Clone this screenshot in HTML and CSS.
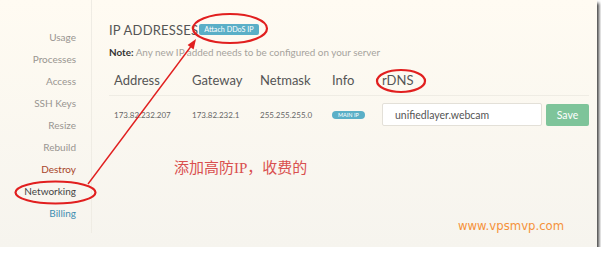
FILE: index.html
```html
<!DOCTYPE html>
<html lang="en">
<head>
  <meta charset="UTF-8">
  <title>Networking</title>
  <link rel="stylesheet" href="styles.css">
</head>
<body>
  <div class="shot">
    <aside class="side">
      <a class="nav">Usage</a>
      <a class="nav">Processes</a>
      <a class="nav">Access</a>
      <a class="nav">SSH Keys</a>
      <a class="nav">Resize</a>
      <a class="nav">Rebuild</a>
      <a class="nav destroy">Destroy</a>
      <a class="nav active">Networking</a>
      <a class="nav billing">Billing</a>
    </aside>
    <main class="main">
      <div class="title-row">
        <h2>IP ADDRESSES</h2>
        <button class="btn-ddos">Attach DDoS IP</button>
      </div>
      <p class="note"><b>Note:</b> Any new IP added needs to be configured on your server</p>
      <div class="ip-table">
        <div class="th">Address</div>
        <div class="th">Gateway</div>
        <div class="th">Netmask</div>
        <div class="th">Info</div>
        <div class="th">rDNS</div>
        <div class="td">173.82.232.207</div>
        <div class="td">173.82.232.1</div>
        <div class="td">255.255.255.0</div>
        <div class="td"><span class="badge">MAIN IP</span></div>
        <div class="td rdns">
          <input class="rdns-input" type="text" value="unifiedlayer.webcam">
          <button class="btn-save">Save</button>
        </div>
      </div>
    </main>

    <!-- annotations drawn over the screenshot -->
    <svg class="marks" width="597" height="247" viewBox="0 0 597 247">
      <ellipse cx="55.5" cy="192.5" rx="40" ry="11" />
      <ellipse cx="230" cy="28.5" rx="37" ry="14.5" />
      <ellipse cx="401" cy="81" rx="24" ry="11" />
      <line x1="88" y1="184" x2="192" y2="45" />
      <polygon class="head" points="196,39 193.6,49.5 187.6,45" />
    </svg>
    <p class="cn">添加高防IP，收费的</p>
    <p class="site">www.vpsmvp.com</p>
  </div>
</body>
</html>
```

FILE: styles.css
```css
body {
  margin: 0;
  background: #ffffff;
  font-family: "Lato", "Open Sans", sans-serif;
}
.shot {
  position: relative;
  width: 597px;
  height: 247px;
  display: flex;
  background: linear-gradient(180deg, #fffbf2, #f6f4ee);
  box-shadow: 2px 3px 3px rgba(0, 0, 0, 0.75);
  overflow: hidden;
}
.side {
  width: 77px;
  padding: 26px 15px 0 0;
  margin-bottom: 14px;
  border-right: 1px solid #efece4;
  display: flex;
  flex-direction: column;
  align-items: flex-end;
}
.nav {
  font-size: 10px;
  line-height: 22px;
  color: #999590;
}
.nav.destroy {
  color: #a8452a;
}
.nav.active {
  color: #444;
}
.nav.billing {
  color: #3d8db0;
}
.main {
  flex: 1;
  padding: 22px 8px 0 17px;
}
.title-row {
  display: flex;
  align-items: center;
  height: 15px;
}
.title-row h2 {
  margin: 0;
  font-size: 13px;
  font-weight: 400;
  color: #555;
  letter-spacing: 0.2px;
}
.btn-ddos {
  margin-left: 1px;
  height: 11px;
  padding: 0 5px;
  border: none;
  border-radius: 2px;
  background: #5aafc7;
  color: #fff;
  font-family: inherit;
  font-size: 7.2px;
  line-height: 11px;
}
.note {
  margin: 9px 0 0;
  font-size: 9.9px;
  line-height: 12px;
  color: #a6a39d;
}
.note b {
  color: #333;
}
.ip-table {
  display: grid;
  grid-template-columns: 78px 68px 72px 50px 1fr;
  margin-top: 14px;
  padding-left: 5px;
}
.th {
  font-size: 13px;
  line-height: 16px;
  color: #555;
  padding-bottom: 7px;
  border-bottom: 1px solid #efece4;
  margin-left: -5px;
  padding-left: 5px;
}
.th:not(:first-child) {
  margin-left: 0;
  padding-left: 0;
}
.td {
  display: flex;
  align-items: center;
  height: 23px;
  margin-top: 7px;
  font-size: 8px;
  color: #666;
}
.badge {
  display: inline-block;
  height: 8px;
  padding: 0 6px;
  border-radius: 4px;
  background: #5aafc7;
  color: #fff;
  font-size: 5.5px;
  line-height: 8px;
}
.rdns {
  gap: 4px;
}
.rdns-input {
  box-sizing: border-box;
  width: 160px;
  height: 23px;
  padding: 0 12px;
  border: 1px solid #e3e0d8;
  border-radius: 2px;
  background: #fff;
  font-family: inherit;
  font-size: 10.5px;
  color: #555;
}
.btn-save {
  width: 43px;
  height: 22px;
  border: none;
  border-radius: 2px;
  background: #7ec49a;
  color: #fff;
  font-family: inherit;
  font-size: 10.5px;
}
.marks {
  position: absolute;
  left: 0;
  top: 0;
  pointer-events: none;
}
.marks ellipse,
.marks line {
  fill: none;
  stroke: #e11f1f;
  stroke-width: 2.2;
}
.marks line {
  stroke-width: 1.4;
}
.marks .head {
  fill: #e11f1f;
}
.cn {
  position: absolute;
  left: 174px;
  top: 156px;
  margin: 0;
  font-family: "Liberation Serif", "Noto Sans CJK SC", serif;
  font-size: 15px;
  color: #d9504f;
}
.site {
  position: absolute;
  left: 458px;
  top: 219px;
  margin: 0;
  font-family: "DejaVu Sans", sans-serif;
  font-size: 11.7px;
  color: #f5923a;
}
```
